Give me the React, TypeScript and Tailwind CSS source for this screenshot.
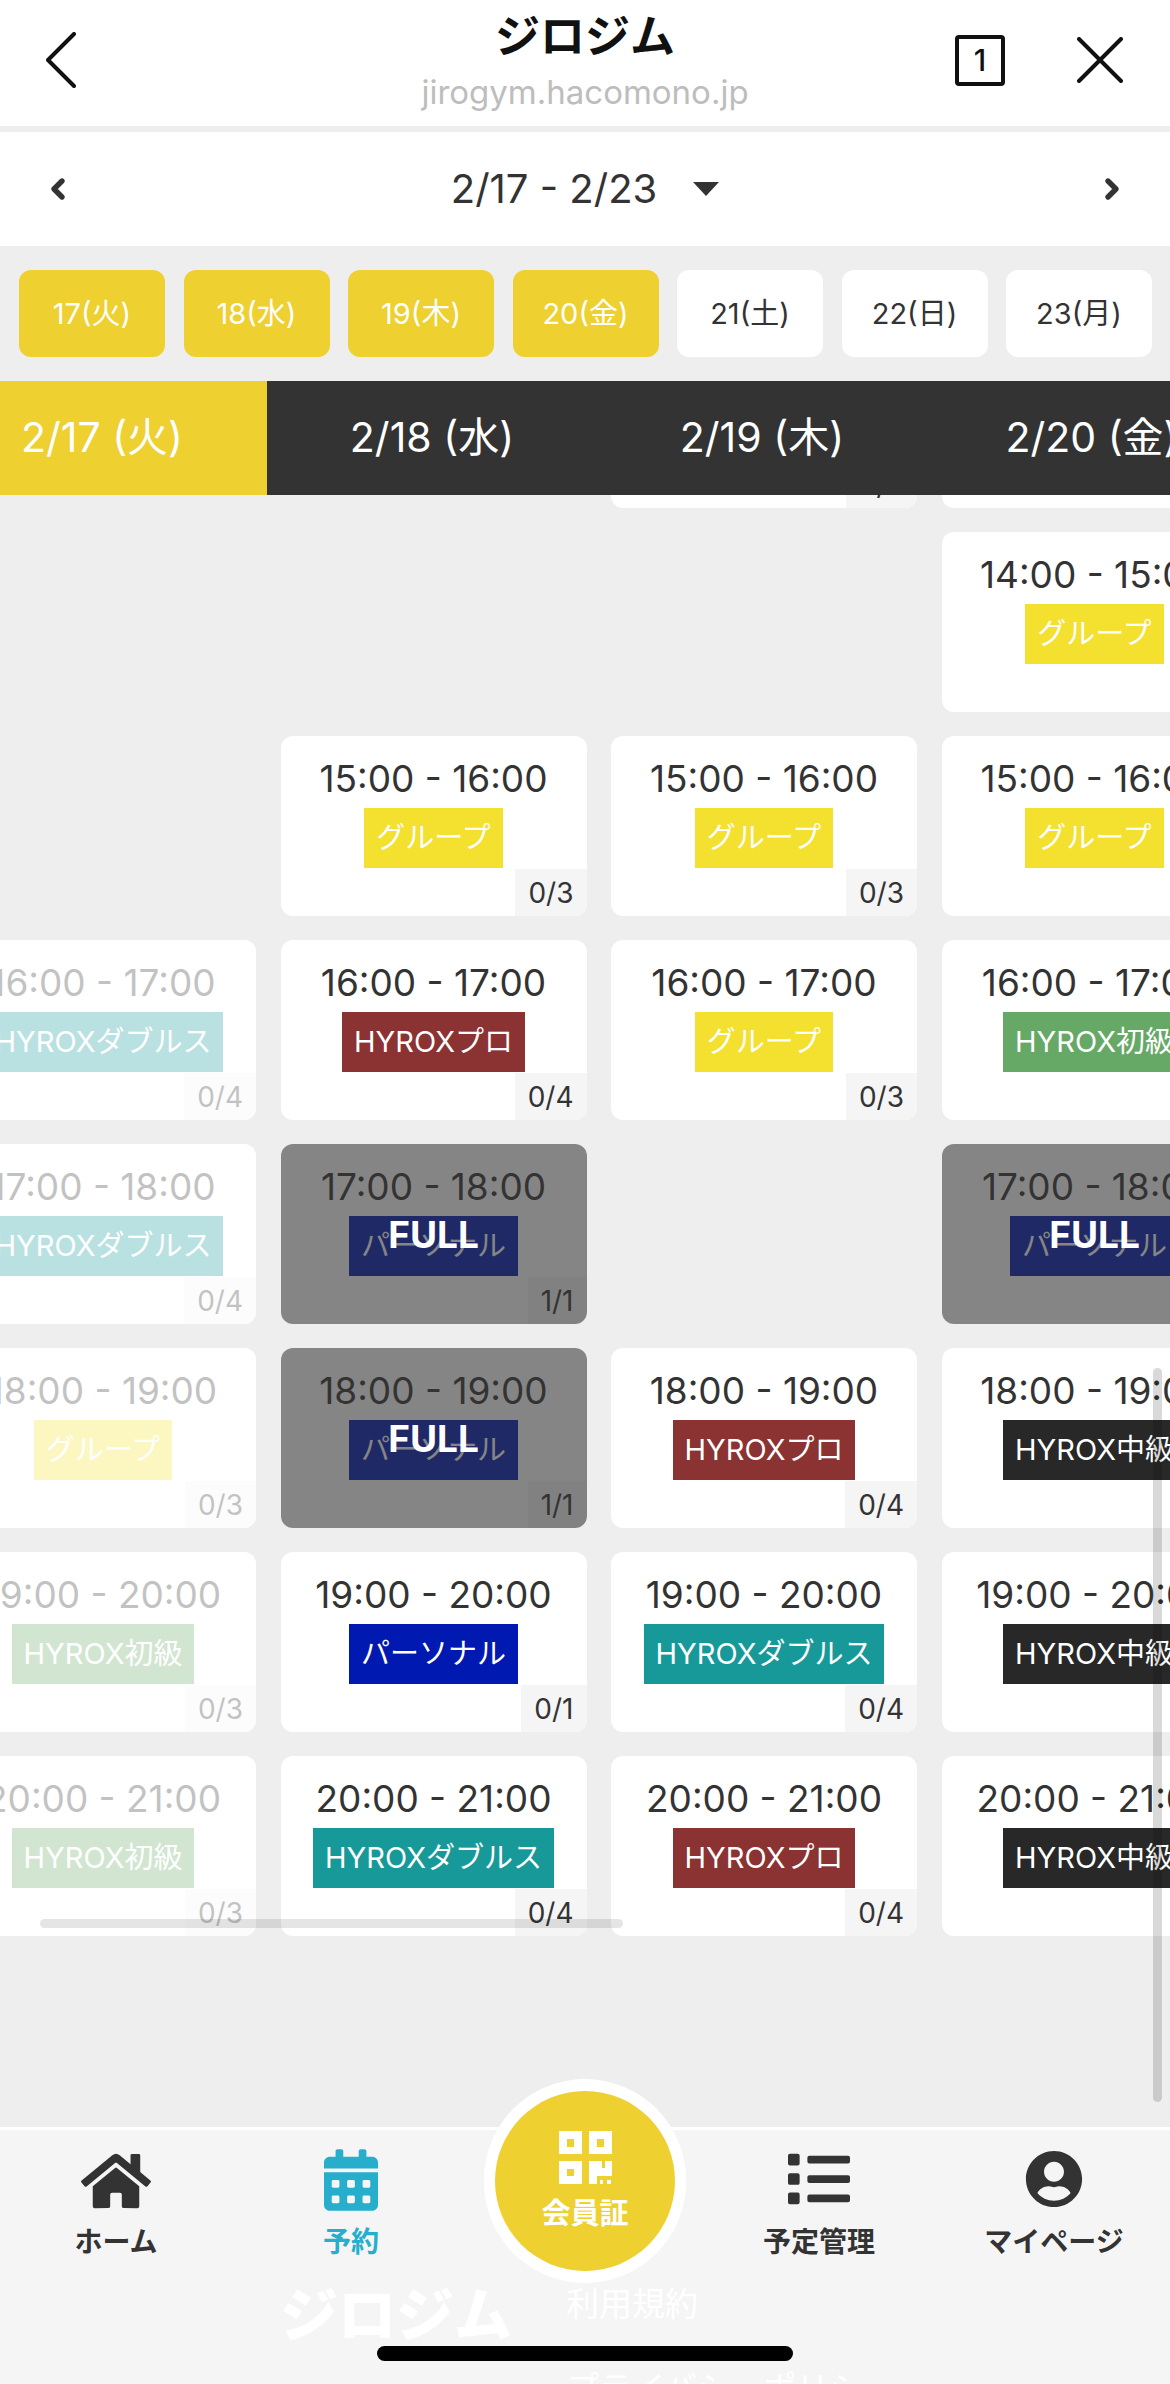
import { ChevronLeft, ChevronRight } from 'lucide-react';
import { FaHome, FaCalendarAlt, FaList, FaUserCircle } from 'react-icons/fa';

const FONT = "font-['Inter','Noto_Sans_CJK_JP',sans-serif]";

type Slot = {
  time: string;
  tag: string;
  tagClass: string;
  count: string;
  faded?: boolean;
  full?: boolean;
};

const GROUP = { tag: 'グループ', tagClass: 'bg-[#f3e02f]' };
const PRO = { tag: 'HYROXプロ', tagClass: 'bg-[#8b3232]' };
const DOUBLES = { tag: 'HYROXダブルス', tagClass: 'bg-[#189999]' };
const BEGINNER = { tag: 'HYROX初級', tagClass: 'bg-[#66a866]' };
const MIDDLE = { tag: 'HYROX中級', tagClass: 'bg-[#282828]' };
const PERSONAL = { tag: 'パーソナル', tagClass: 'bg-[#0019b0]' };

const rows: (Slot | null)[][] = [
  [
    null,
    null,
    { time: '14:00 - 15:00', count: '0/3', ...GROUP },
    { time: '13:00 - 14:00', count: '0/3', ...GROUP },
  ],
  [null, null, null, { time: '14:00 - 15:00', count: '0/3', ...GROUP }],
  [
    null,
    { time: '15:00 - 16:00', count: '0/3', ...GROUP },
    { time: '15:00 - 16:00', count: '0/3', ...GROUP },
    { time: '15:00 - 16:00', count: '0/3', ...GROUP },
  ],
  [
    { time: '16:00 - 17:00', count: '0/4', faded: true, ...DOUBLES },
    { time: '16:00 - 17:00', count: '0/4', ...PRO },
    { time: '16:00 - 17:00', count: '0/3', ...GROUP },
    { time: '16:00 - 17:00', count: '0/3', ...BEGINNER },
  ],
  [
    { time: '17:00 - 18:00', count: '0/4', faded: true, ...DOUBLES },
    { time: '17:00 - 18:00', count: '1/1', full: true, ...PERSONAL },
    null,
    { time: '17:00 - 18:00', count: '1/1', full: true, ...PERSONAL },
  ],
  [
    { time: '18:00 - 19:00', count: '0/3', faded: true, ...GROUP },
    { time: '18:00 - 19:00', count: '1/1', full: true, ...PERSONAL },
    { time: '18:00 - 19:00', count: '0/4', ...PRO },
    { time: '18:00 - 19:00', count: '0/4', ...MIDDLE },
  ],
  [
    { time: '19:00 - 20:00', count: '0/3', faded: true, ...BEGINNER },
    { time: '19:00 - 20:00', count: '0/1', ...PERSONAL },
    { time: '19:00 - 20:00', count: '0/4', ...DOUBLES },
    { time: '19:00 - 20:00', count: '0/4', ...MIDDLE },
  ],
  [
    { time: '20:00 - 21:00', count: '0/3', faded: true, ...BEGINNER },
    { time: '20:00 - 21:00', count: '0/4', ...DOUBLES },
    { time: '20:00 - 21:00', count: '0/4', ...PRO },
    { time: '20:00 - 21:00', count: '0/4', ...MIDDLE },
  ],
];

const chips = [
  { label: '17(火)', on: true },
  { label: '18(水)', on: true },
  { label: '19(木)', on: true },
  { label: '20(金)', on: true },
  { label: '21(土)', on: false },
  { label: '22(日)', on: false },
  { label: '23(月)', on: false },
];

const tabs = ['2/17 (火)', '2/18 (水)', '2/19 (木)', '2/20 (金)'];

function SlotCard({ slot }: { slot: Slot }) {
  return (
    <div className="relative h-[180px] overflow-hidden rounded-xl bg-white">
      <div className="flex h-[72px] items-center justify-center pt-[12px] text-[37px] leading-none whitespace-nowrap text-[#333]">
        {slot.time}
      </div>
      <div className="flex justify-center">
        <span className={`flex h-[60px] items-center px-3 text-[29px] whitespace-nowrap text-white ${slot.tagClass}`}>
          {slot.tag}
        </span>
      </div>
      <div className="absolute right-0 bottom-0 flex h-[47px] items-center bg-[#f5f5f5] px-[13px] text-[28px] text-[#333]">
        {slot.count}
      </div>
      {slot.faded && <div className="absolute inset-0 bg-white/70" />}
      {slot.full && (
        <div className="absolute inset-0 flex justify-center bg-[#333]/60 pt-[68px]">
          <span className="text-[37px] leading-[46px] font-bold text-white">FULL</span>
        </div>
      )}
    </div>
  );
}

function QrIcon() {
  return (
    <svg width="53" height="53" viewBox="0 0 53 53" fill="#fff">
      <path fillRule="evenodd" d="M0 0h23v23H0zM8 8v8h7V8z" />
      <path fillRule="evenodd" d="M30 0h23v23H30zM38 8v8h7V8z" />
      <path fillRule="evenodd" d="M0 30h23v23H0zM8 38v7h7v-7z" />
      <path d="M30 30h13v7h-5v16h-8zM46 30h7v15H38v-8h8zM41 49h3v4h-3zM48 49h4v4h-4z" />
    </svg>
  );
}

export default function App() {
  return (
    <div className={`relative flex h-[2384px] w-[1170px] flex-col overflow-hidden bg-[#eeeeee] ${FONT}`}>
      {/* browser header */}
      <header className="flex h-[126px] shrink-0 bg-white pr-[47px] pl-[46px]">
        <div className="flex w-[175px] items-center pb-[6px]">
          <svg width="30" height="56" viewBox="0 0 30 56" fill="none" stroke="#111" strokeWidth="4" strokeLinecap="round" strokeLinejoin="round">
            <path d="M28 2 2 28l26 26" />
          </svg>
        </div>
        <div className="flex flex-1 flex-col items-center pt-[15px]">
          <div className="text-[45px] leading-[44px] font-bold text-[#111]">ジロジム</div>
          <div className="mt-[15px] text-[33px] leading-[36px] text-[#bdbdbd]">jirogym.hacomono.jp</div>
        </div>
        <div className="flex w-[174px] items-center justify-end gap-[72px] pb-[6px]">
          <div className="flex h-[51px] w-[50px] items-center justify-center rounded-[4px] border-[4px] border-[#111] text-[30px] font-medium text-[#111]">
            1
          </div>
          <svg width="46" height="46" viewBox="0 0 46 46" fill="none" stroke="#111" strokeWidth="4" strokeLinecap="round">
            <path d="M2 2l42 42M44 2 2 44" />
          </svg>
        </div>
      </header>

      {/* week selector */}
      <div className="mt-[6px] flex h-[114px] shrink-0 items-center justify-between bg-white px-[42px]">
        <ChevronLeft className="h-[32px] w-[32px] text-[#333]" strokeWidth={4} />
        <div className="flex items-center gap-[36px] text-[40px] text-[#333]">
          <span>2/17 - 2/23</span>
          <span className="h-0 w-0 border-x-[13px] border-t-[14px] border-x-transparent border-t-[#333]" />
        </div>
        <ChevronRight className="h-[32px] w-[32px] text-[#333]" strokeWidth={4} />
      </div>

      {/* day chips */}
      <div className="flex h-[135px] shrink-0 items-center gap-[18.5px] pl-[19px]">
        {chips.map((chip) => (
          <div
            key={chip.label}
            className={`flex h-[87px] w-[146px] items-center justify-center rounded-xl text-[29px] ${
              chip.on ? 'bg-[#eed030] text-white' : 'bg-white text-[#333]'
            }`}
          >
            {chip.label}
          </div>
        ))}
      </div>

      {/* day tabs */}
      <div className="flex h-[114px] shrink-0 overflow-hidden bg-[#333]">
        {tabs.map((tab, i) => (
          <div
            key={tab}
            className={`flex h-full w-[330px] shrink-0 items-center justify-center text-[41px] whitespace-nowrap text-white ${
              i === 0 ? 'ml-[-63px] bg-[#eed030]' : ''
            }`}
          >
            {tab}
          </div>
        ))}
      </div>

      {/* timetable */}
      <main className="min-h-0 flex-1 overflow-hidden">
        <div className="mt-[-167px] ml-[-50px] grid w-[1297px] grid-cols-[repeat(4,306px)] gap-x-[24.5px] gap-y-6">
          {rows.flatMap((row, r) =>
            row.map((slot, c) => (slot ? <SlotCard key={`${r}-${c}`} slot={slot} /> : <div key={`${r}-${c}`} />)),
          )}
        </div>
      </main>

      {/* bottom nav */}
      <nav className="relative h-[257px] shrink-0 border-t-[3px] border-white bg-[#f5f5f5]">
        <div className="flex h-[130px] items-start">
          <div className="flex w-[232px] flex-col items-center pt-[20px]">
            <FaHome className="h-[62px] w-[70px] text-[#333]" />
            <span className="mt-[15px] text-[28px] leading-[30px] font-bold text-[#333]">ホーム</span>
          </div>
          <div className="flex w-[238px] flex-col items-center pt-[19px]">
            <FaCalendarAlt className="h-[62px] w-[54px] text-[#28aecd]" />
            <span className="mt-[16px] text-[28px] leading-[30px] font-bold text-[#28aecd]">予約</span>
          </div>
          <div className="w-[230px]" />
          <div className="flex w-[238px] flex-col items-center pt-[18px]">
            <FaList className="h-[62px] w-[62px] text-[#333]" />
            <span className="mt-[17px] text-[28px] leading-[30px] font-bold text-[#333]">予定管理</span>
          </div>
          <div className="flex w-[232px] flex-col items-center pt-[20px]">
            <FaUserCircle className="h-[58px] w-[58px] text-[#333]" />
            <span className="mt-[19px] text-[28px] leading-[30px] font-bold text-[#333]">マイページ</span>
          </div>
        </div>

        {/* footer showing through under the nav */}
        <div className="mt-[20px] flex">
          <div className="ml-[280px] text-[58px] leading-[70px] font-black text-white">ジロジム</div>
          <div className="ml-[54px] flex flex-col gap-[44px] pt-[4px] text-[33px] leading-[40px] text-white">
            <span>利用規約</span>
            <span>プライバシーポリシー</span>
          </div>
        </div>

        {/* member card button */}
        <div className="absolute top-[-51px] left-[484px] flex h-[204px] w-[202px] items-center justify-center rounded-full bg-white">
          <div className="flex h-[180px] w-[180px] flex-col items-center justify-center rounded-full bg-[#eed030] pb-[2px]">
            <QrIcon />
            <span className="mt-[15px] text-[29px] leading-[30px] font-bold text-white">会員証</span>
          </div>
        </div>

        <div className="absolute top-[216px] left-[377px] h-[15px] w-[416px] rounded-full bg-black" />
      </nav>

      {/* overlay scrollbars */}
      <div className="absolute top-[1919px] left-[40px] h-[9px] w-[583px] rounded-full bg-black/10" />
      <div className="absolute top-[1368px] left-[1153px] h-[734px] w-[9px] rounded-full bg-black/15" />
    </div>
  );
}
